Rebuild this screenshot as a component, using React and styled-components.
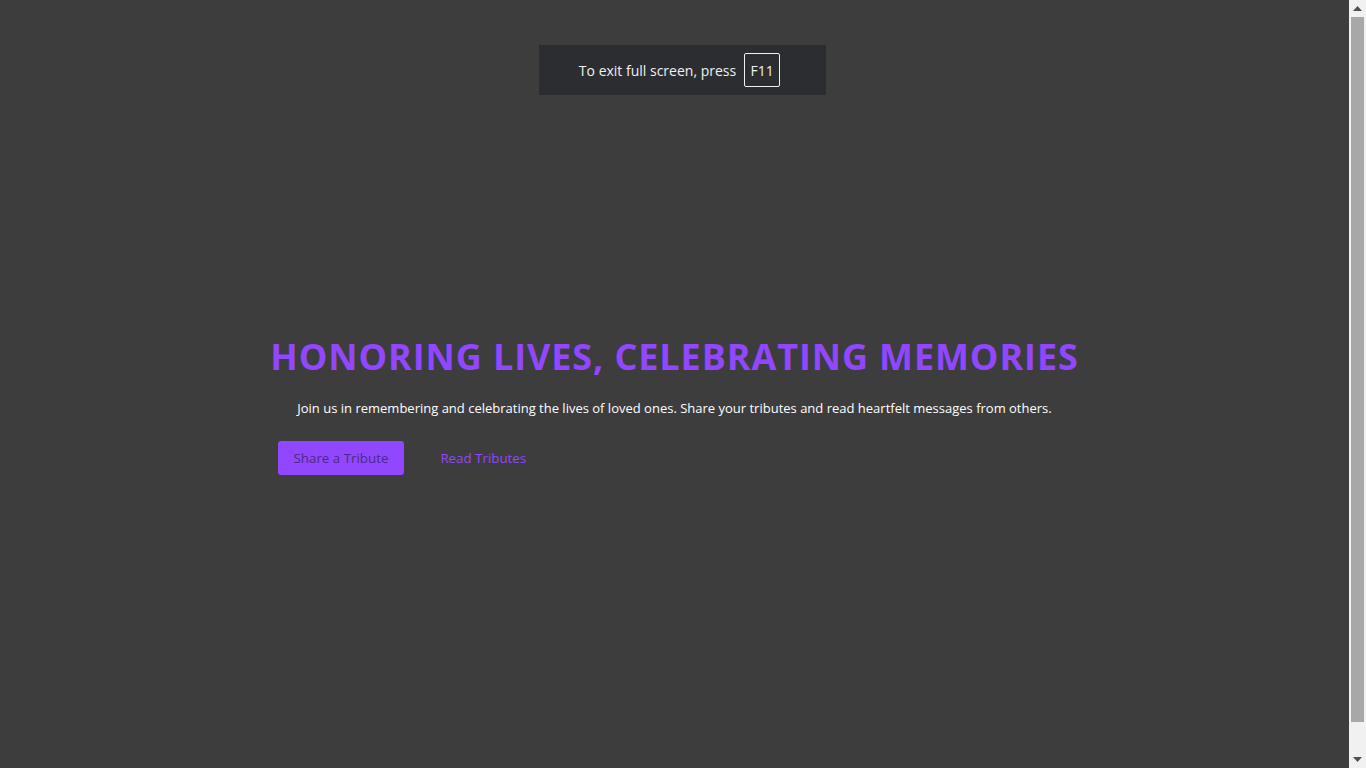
import React from 'react'
import styled, { createGlobalStyle } from 'styled-components'

const GlobalStyle = createGlobalStyle`
  html, body {
    margin: 0;
    padding: 0;
    background: #3d3d3d;
  }
  body {
    font-family: 'Comic Sans MS', 'Open Sans', sans-serif;
  }
`;

const Page = styled.div`
  position: relative;
  min-height: 800px;
  padding-right: 17px;
  display: flex;
  align-items: center;
  justify-content: center;
`;

const Hero = styled.section`
  width: 808px;
  display: flex;
  flex-direction: column;
  align-items: center;
  padding-top: 6px;
`;

const Title = styled.h1`
  margin: 0;
  font-size: 36px;
  font-weight: 700;
  color: #9147ff;
  letter-spacing: 0.9px;
  white-space: nowrap;
  line-height: 50px;
`;

const Lead = styled.p`
  margin: 17px 0 24px;
  font-size: 13px;
  color: #ffffff;
  white-space: nowrap;
`;

const Actions = styled.div`
  align-self: stretch;
  display: flex;
  gap: 20px;
  padding-left: 7px;
`;

const Button = styled.button`
  font-family: inherit;
  font-size: 13.33px;
  line-height: 18px;
  padding: 8px 16px;
  border: none;
  border-radius: 3px;
  cursor: pointer;
  background: ${p => (p.$primary ? '#9147ff' : 'transparent')};
  color: ${p => (p.$primary ? '#4b2a80' : '#9147ff')};
`;

const Notice = styled.div`
  position: fixed;
  top: 45px;
  left: 539px;
  width: 287px;
  height: 50px;
  box-sizing: border-box;
  background: #2b2d31;
  display: flex;
  align-items: center;
  justify-content: center;
  gap: 8px;
  padding-right: 6px;
  font-family: 'Open Sans', sans-serif;
  font-size: 14px;
  color: #f0f0f0;
`;

const Key = styled.span`
  border: 1px solid #f0f0f0;
  border-radius: 2px;
  height: 34px;
  width: 36px;
  box-sizing: border-box;
  display: flex;
  align-items: center;
  justify-content: center;
`;

const Scrollbar = styled.div`
  position: fixed;
  top: 0;
  right: 0;
  width: 17px;
  height: 100vh;
  background: #f1f1f1;
  display: flex;
  flex-direction: column;
  align-items: center;
`;

const Arrow = styled.div`
  height: 17px;
  width: 17px;
  display: flex;
  align-items: center;
  justify-content: center;
`;

const Thumb = styled.div`
  flex: 1;
  width: 13px;
  margin-bottom: 29px;
  background: #a8a8a8;
`;

function Tri({ down }) {
  return (
    <svg width="9" height="5" viewBox="0 0 9 5">
      <path d={down ? 'M0 0h9L4.5 5z' : 'M4.5 0L9 5H0z'} fill="#505050" />
    </svg>
  )
}

export default function App() {
  return (
    <>
      <GlobalStyle />
      <Page>
        <Hero>
          <Title>HONORING LIVES, CELEBRATING MEMORIES</Title>
          <Lead>
            Join us in remembering and celebrating the lives of loved ones. Share your tributes and read heartfelt messages from others.
          </Lead>
          <Actions>
            <Button $primary>Share a Tribute</Button>
            <Button>Read Tributes</Button>
          </Actions>
        </Hero>
      </Page>
      <Notice>
        To exit full screen, press <Key>F11</Key>
      </Notice>
      <Scrollbar>
        <Arrow><Tri /></Arrow>
        <Thumb />
        <Arrow><Tri down /></Arrow>
      </Scrollbar>
    </>
  )
}
